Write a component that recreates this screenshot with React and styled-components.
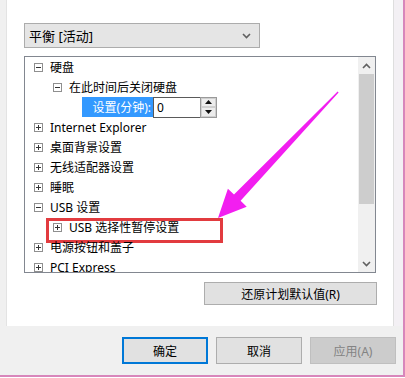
import styled, { createGlobalStyle } from "styled-components";

const GlobalStyle = createGlobalStyle`
  html, body {
    margin: 0;
    padding: 0;
    background: #ffffff;
  }
  * { box-sizing: border-box; }
`;

const FONT = `"Segoe UI", "Noto Sans", "Noto Sans CJK SC", sans-serif`;

const Window = styled.div`
  position: relative;
  width: 405px;
  height: 377px;
  display: flex;
  flex-direction: column;
  background: #f0f0f0;
  border-right: 2px solid #d886bb;
  border-bottom: 2px solid #d886bb;
  font-family: ${FONT};
  font-size: 12px;
  color: #000;
`;

const Top = styled.div`
  display: flex;
  height: 326px;
`;

const LeftStrip = styled.div`
  width: 7px;
  background: #f0f0f0;
  border-right: 1px solid #e3e3e3;
`;

const RightStrip = styled.div`
  flex: 1;
  background: #f3f0f4;
  border-left: 1px solid #dedede;
`;

const Panel = styled.div`
  width: 386px;
  background: #ffffff;
  padding: 23px 16px 0 17px;
  display: flex;
  flex-direction: column;
`;

const Select = styled.div`
  width: 236px;
  height: 25px;
  background: #e5e5e5;
  border: 1px solid #acacac;
  display: flex;
  align-items: center;
  justify-content: space-between;
  padding: 0 8px 0 4px;
  font-size: 13px;
`;

const Tree = styled.div`
  margin-top: 8px;
  width: 352px;
  height: 217px;
  border: 1px solid #828790;
  display: flex;
  background: #fff;
`;

const List = styled.div`
  flex: 1;
  overflow: hidden;
  display: flex;
  flex-direction: column;
`;

const Row = styled.div`
  position: relative;
  height: 20px;
  flex-shrink: 0;
  display: flex;
  align-items: center;
  padding-left: ${p => 9 + (p.$level || 0) * 19}px;
  white-space: nowrap;

  ${p => p.$marked && `
    &::after {
      content: "";
      position: absolute;
      left: 21px;
      top: 1px;
      width: 171px;
      height: 19px;
      border: 3px solid #e23b3f;
    }
  `}
`;

const Toggle = styled.span`
  width: 9px;
  height: 9px;
  border: 1px solid #8f8f8f;
  margin-right: 7px;
  position: relative;
  flex-shrink: 0;

  &::before {
    content: "";
    position: absolute;
    left: 1px;
    top: 3px;
    width: 5px;
    height: 1px;
    background: #333;
  }

  ${p => p.$plus && `
    &::after {
      content: "";
      position: absolute;
      left: 3px;
      top: 1px;
      width: 1px;
      height: 5px;
      background: #333;
    }
  `}
`;

const SettingRow = styled.div`
  height: 20px;
  flex-shrink: 0;
  display: flex;
  align-items: center;
  padding-left: 57px;
`;

const SettingLabel = styled.span`
  width: 71px;
  height: 20px;
  background: #3399ff;
  color: #fff;
  display: flex;
  align-items: center;
  justify-content: flex-end;
  padding-right: 2px;
`;

const NumberInput = styled.span`
  width: 47px;
  height: 21px;
  border: 1px solid #5a5a5a;
  border-right: none;
  display: flex;
  align-items: center;
  padding-left: 3px;
`;

const Spinner = styled.span`
  width: 17px;
  height: 21px;
  border: 1px solid #9a9a9a;
  display: flex;
  flex-direction: column;
  background: #e9e9e9;
`;

const SpinButton = styled.span`
  flex: 1;
  display: flex;
  align-items: center;
  justify-content: center;
  border: 1px solid #cfcfcf;
  background: #ececec;
`;

const Scrollbar = styled.div`
  width: 17px;
  background: #f0f0f0;
  display: flex;
  flex-direction: column;
`;

const ScrollArrow = styled.div`
  height: 17px;
  display: flex;
  align-items: center;
  justify-content: center;
`;

const Thumb = styled.div`
  height: 130px;
  margin: 0 1px;
  background: #cdcdcd;
`;

const Track = styled.div`
  flex: 1;
`;

const RestoreRow = styled.div`
  display: flex;
  justify-content: flex-end;
  margin-top: 9px;
`;

const Button = styled.div`
  width: ${p => p.$width || "86px"};
  height: ${p => p.$height || "27px"};
  display: flex;
  align-items: center;
  justify-content: center;
  background: ${p => (p.$disabled ? "#cccccc" : "#e1e1e1")};
  color: ${p => (p.$disabled ? "#838383" : "#000")};
  border: ${p =>
    p.$primary ? "2px solid #0078d7" : p.$disabled ? "1px solid #bfbfbf" : "1px solid #adadad"};
  font-size: 12px;
`;

const Footer = styled.div`
  flex: 1;
  display: flex;
  justify-content: flex-end;
  align-items: flex-start;
  gap: 8px;
  padding: 11px 7px 0 0;
`;

const Overlay = styled.svg`
  position: absolute;
  left: 0;
  top: 0;
  pointer-events: none;
`;

const Chevron = ({ up, color = "#606060" }) => (
  <svg width="9" height="6" viewBox="0 0 9 6">
    <polyline
      points={up ? "1,5 4.5,1.5 8,5" : "1,1 4.5,4.5 8,1"}
      fill="none"
      stroke={color}
      strokeWidth="1.6"
    />
  </svg>
);

const Tri = ({ up }) => (
  <svg width="7" height="4" viewBox="0 0 7 4">
    <polygon points={up ? "0,4 3.5,0 7,4" : "0,0 3.5,4 7,0"} fill="#111" />
  </svg>
);

const items = [
  { text: "硬盘", level: 0, open: true },
  { text: "在此时间后关闭硬盘", level: 1, open: true },
  { setting: true },
  { text: "Internet Explorer", level: 0 },
  { text: "桌面背景设置", level: 0 },
  { text: "无线适配器设置", level: 0 },
  { text: "睡眠", level: 0 },
  { text: "USB 设置", level: 0, open: true },
  { text: "USB 选择性暂停设置", level: 1, marked: true },
  { text: "电源按钮和盖子", level: 0 },
  { text: "PCI Express", level: 0 },
];

export default function App() {
  return (
    <>
      <GlobalStyle />
      <Window>
        <Top>
          <LeftStrip />
          <Panel>
            <Select>
              <span>平衡 [活动]</span>
              <Chevron />
            </Select>
            <Tree>
              <List>
                {items.map((it, i) =>
                  it.setting ? (
                    <SettingRow key={i}>
                      <SettingLabel>设置(分钟):</SettingLabel>
                      <NumberInput>0</NumberInput>
                      <Spinner>
                        <SpinButton><Tri up /></SpinButton>
                        <SpinButton><Tri /></SpinButton>
                      </Spinner>
                    </SettingRow>
                  ) : (
                    <Row key={i} $level={it.level} $marked={it.marked}>
                      <Toggle $plus={!it.open} />
                      {it.text}
                    </Row>
                  )
                )}
              </List>
              <Scrollbar>
                <ScrollArrow><Chevron up /></ScrollArrow>
                <Thumb />
                <Track />
                <ScrollArrow><Chevron /></ScrollArrow>
              </Scrollbar>
            </Tree>
            <RestoreRow>
              <Button $width="173px" $height="23px">还原计划默认值(R)</Button>
            </RestoreRow>
          </Panel>
          <RightStrip />
        </Top>
        <Footer>
          <Button $primary>确定</Button>
          <Button>取消</Button>
          <Button $disabled>应用(A)</Button>
        </Footer>
        <Overlay width="405" height="378" viewBox="0 0 405 378">
          <polygon
            points="218,218 227.9,188.7 234,194.6 337.6,91.6 338.6,92.6 240.6,200.8 246.7,206.7"
            fill="#f21ef0"
          />
        </Overlay>
      </Window>
    </>
  );
}
